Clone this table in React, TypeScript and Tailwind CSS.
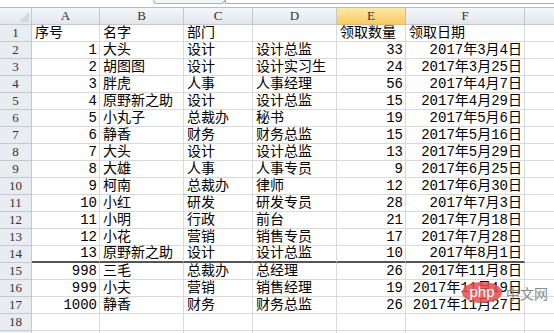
import React from 'react'

type Row = [string, string, string, string, string, string]

const rows: Row[] = [
  ['序号', '名字', '部门', '', '领取数量', '领取日期'],
  ['1', '大头', '设计', '设计总监', '33', '2017年3月4日'],
  ['2', '胡图图', '设计', '设计实习生', '24', '2017年3月25日'],
  ['3', '胖虎', '人事', '人事经理', '56', '2017年4月7日'],
  ['4', '原野新之助', '设计', '设计总监', '15', '2017年4月29日'],
  ['5', '小丸子', '总裁办', '秘书', '19', '2017年5月6日'],
  ['6', '静香', '财务', '财务总监', '15', '2017年5月16日'],
  ['7', '大头', '设计', '设计总监', '13', '2017年5月29日'],
  ['8', '大雄', '人事', '人事专员', '9', '2017年6月25日'],
  ['9', '柯南', '总裁办', '律师', '12', '2017年6月30日'],
  ['10', '小红', '研发', '研发专员', '28', '2017年7月3日'],
  ['11', '小明', '行政', '前台', '21', '2017年7月18日'],
  ['12', '小花', '营销', '销售专员', '17', '2017年7月28日'],
  ['13', '原野新之助', '设计', '设计总监', '10', '2017年8月1日'],
  ['998', '三毛', '总裁办', '总经理', '26', '2017年11月8日'],
  ['999', '小夫', '营销', '销售经理', '19', '2017年11月19日'],
  ['1000', '静香', '财务', '财务总监', '26', '2017年11月27日'],
  ['', '', '', '', '', ''],
  ['', '', '', '', '', ''],
]

const cols = ['A', 'B', 'C', 'D', 'E', 'F']
const gridCols = 'grid-cols-[32px_68px_84px_69px_84px_69px_119px_1fr]'

export default function App() {
  return (
    <div className="w-[554px] h-[333px] overflow-hidden bg-white font-['Liberation_Mono','Noto_Sans_CJK_SC',monospace] text-[14px] text-black">
      {/* formula bar remnant */}
      <div className="h-[8px] flex border-b border-[#b6bcc6] bg-white">
        <div className="w-[153px] overflow-hidden">
          <div className="ml-[55px] -mt-[9px] text-[13px] leading-[12px] font-bold tracking-[2px]">320</div>
        </div>
        <div className="w-[72px] h-[4px] border-x border-b border-[#a9b0bb] rounded-b-[6px] bg-[#f4f5f7]" />
        <div className="h-[4px] border-l border-[#a9b0bb] flex-1 border-b" />
      </div>

      <div className={`grid ${gridCols} auto-rows-[17px]`}>
        {/* header row */}
        <div className="border-r border-b border-[#c3c9d1] bg-gradient-to-b from-[#f4f6f9] to-[#e3e7ed] flex items-end justify-end p-[2px]">
          <div className="w-0 h-0 border-l-[10px] border-l-transparent border-b-[10px] border-b-[#d3d7dd]" />
        </div>
        {cols.map((c) => (
          <div
            key={c}
            className={
              c === 'E'
                ? 'border-r border-b border-[#f0b64a] bg-gradient-to-b from-[#fde8a8] to-[#f8cb5e] flex items-center justify-center font-["Liberation_Serif",serif] text-[13px] text-[#333]'
                : 'border-r border-b border-[#c3c9d1] bg-gradient-to-b from-[#f4f6f9] to-[#e3e7ed] flex items-center justify-center font-["Liberation_Serif",serif] text-[13px] text-[#333]'
            }
          >
            {c}
          </div>
        ))}
        <div className="border-b border-[#c3c9d1] bg-gradient-to-b from-[#f4f6f9] to-[#e3e7ed]" />

        {rows.map((r, i) => {
          const thick = i === 13
          return (
            <React.Fragment key={i}>
              <div className="border-r border-b border-[#c3c9d1] bg-[#e9edf2] flex items-center justify-center font-['Liberation_Serif',serif] text-[13px] text-[#333]">
                {i + 1}
              </div>
              {r.map((v, j) => {
                const right = i > 0 && (j === 0 || j >= 4)
                return (
                  <div
                    key={j}
                    className={`border-r border-[#d9d9d9] flex items-end leading-[16px] whitespace-nowrap overflow-visible ${
                      thick ? 'border-b-2 border-b-[#555]' : 'border-b'
                    } ${right ? 'justify-end pr-[2px]' : 'justify-start pl-[3px]'}`}
                  >
                    {v}
                  </div>
                )
              })}
              <div className="border-b border-[#d9d9d9]" />
            </React.Fragment>
          )
        })}
      </div>

      {/* watermark */}
      <div className="relative">
        <div className="absolute left-[462px] -top-[66px] flex items-center gap-[4px]">
          <div className="w-[40px] h-[21px] rounded-[50%] bg-[#e84a4a]/85 flex items-center justify-center text-white font-['Liberation_Sans',sans-serif] text-[15px] leading-none pb-[2px]">
            php
          </div>
          <div className="text-[#8a8a8a] text-[14px] font-['Noto_Sans_CJK_SC',sans-serif] leading-none">中文网</div>
        </div>
      </div>
    </div>
  )
}
